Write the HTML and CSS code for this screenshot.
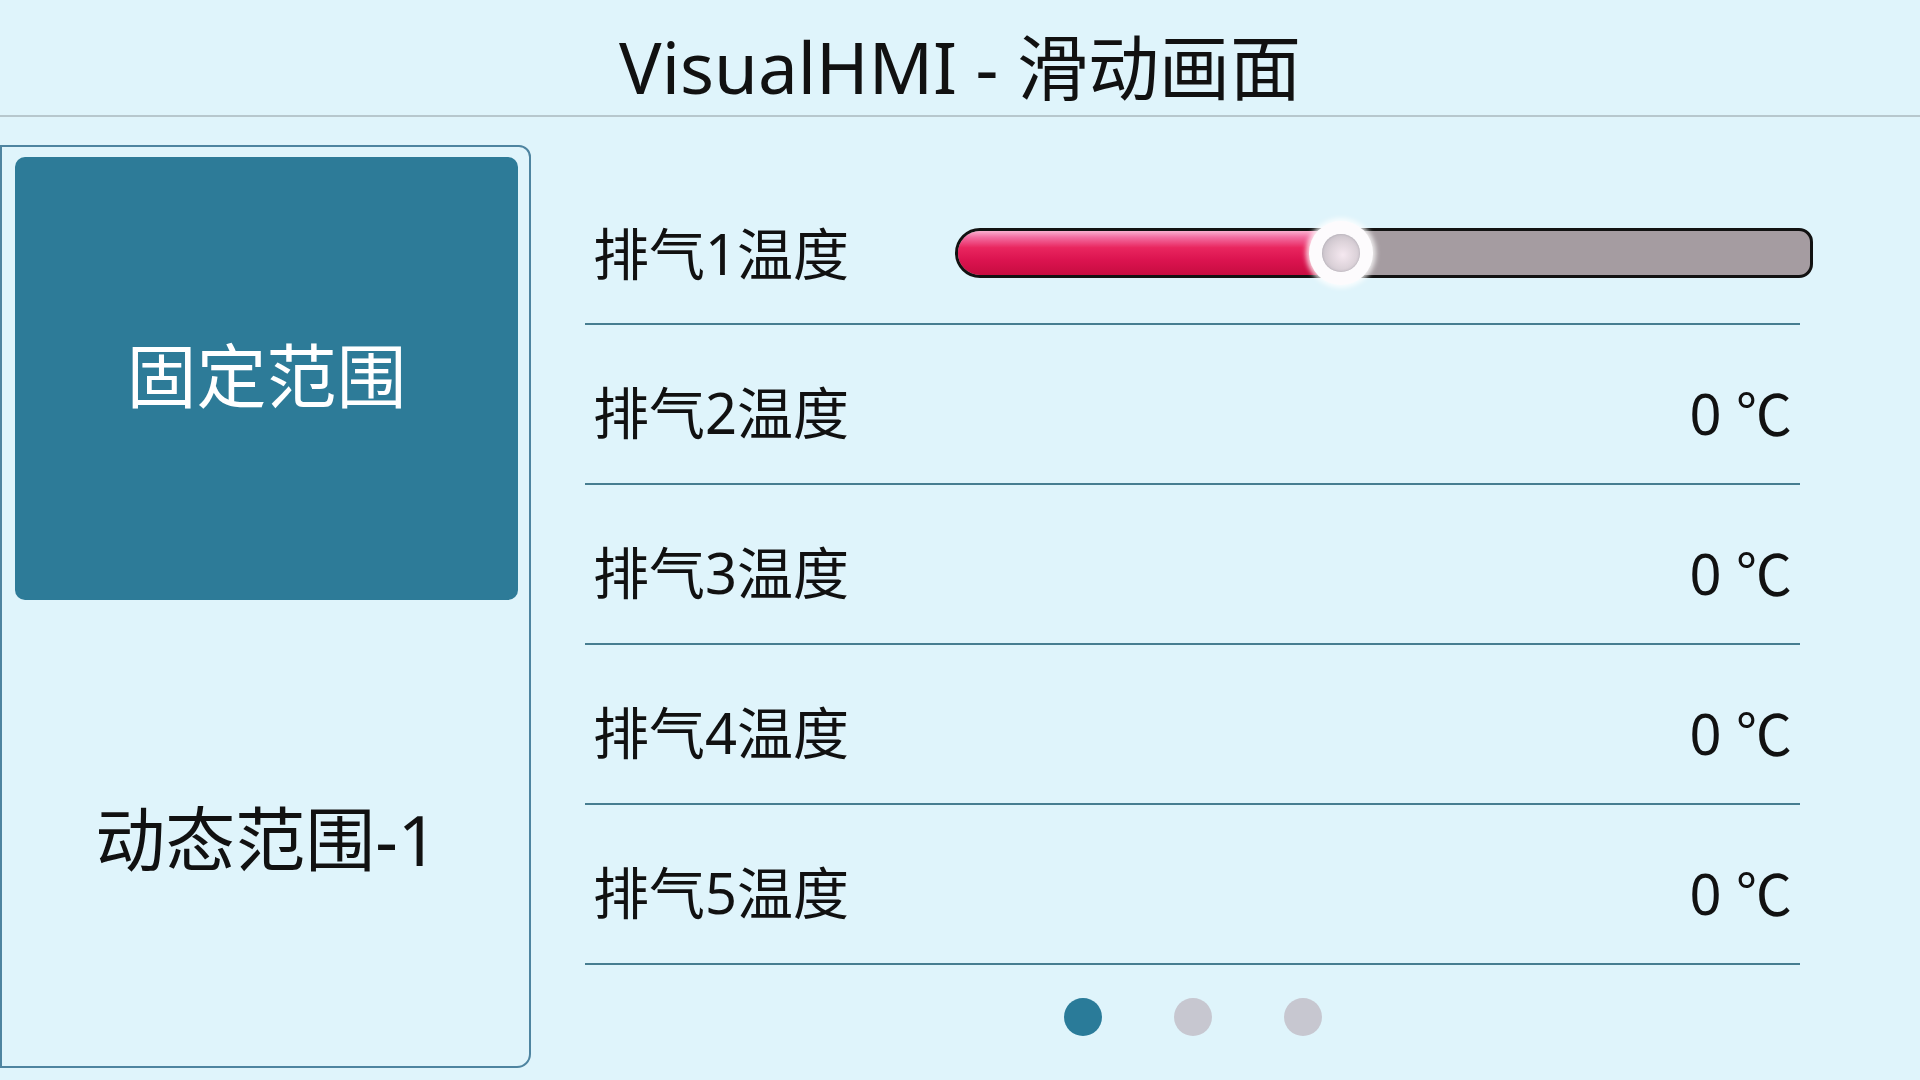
FILE: index.html
```html
<!DOCTYPE html>
<html lang="zh-CN">
<head>
<meta charset="utf-8">
<title>VisualHMI - 滑动画面</title>
<link rel="stylesheet" href="styles.css">
</head>
<body>
<header class="topbar">
  <h1 class="title">VisualHMI - 滑动画面</h1>
</header>
<main class="main">
  <nav class="side">
    <div class="side-item active">固定范围</div>
    <div class="side-item">动态范围-1</div>
  </nav>
  <section class="content">
    <div class="rows">
      <div class="row row-slider">
        <span class="label">排气1温度</span>
        <div class="slider">
          <div class="fill" style="width:45%"></div>
          <div class="knob" style="left:45%"></div>
        </div>
      </div>
      <div class="row">
        <span class="label">排气2温度</span>
        <span class="value">0 <span class="unit">℃</span></span>
      </div>
      <div class="row">
        <span class="label">排气3温度</span>
        <span class="value">0 <span class="unit">℃</span></span>
      </div>
      <div class="row">
        <span class="label">排气4温度</span>
        <span class="value">0 <span class="unit">℃</span></span>
      </div>
      <div class="row">
        <span class="label">排气5温度</span>
        <span class="value">0 <span class="unit">℃</span></span>
      </div>
    </div>
    <div class="dots">
      <span class="dot on"></span>
      <span class="dot"></span>
      <span class="dot"></span>
    </div>
  </section>
</main>
</body>
</html>
```

FILE: styles.css
```css
* { box-sizing: border-box; }

html, body {
  margin: 0;
  padding: 0;
}

body {
  width: 1920px;
  height: 1080px;
  overflow: hidden;
  background: #dff4fb;
  color: #111;
  font-family: "Noto Sans", "Noto Sans CJK SC", sans-serif;
}

.topbar {
  height: 117px;
  border-bottom: 2px solid #b7c7cd;
  padding-top: 18px;
}

.title {
  margin: 0;
  font-size: 71px;
  font-weight: 400;
  line-height: 97px;
  text-align: center;
}

.main {
  display: flex;
  align-items: flex-start;
  height: 963px;
}

.side {
  margin-top: 28px;
  width: 531px;
  height: 923px;
  flex: none;
  border: 2px solid #4e84a0;
  border-radius: 0 12px 14px 0;
  padding: 10px 11px 8px 13px;
  display: flex;
  flex-direction: column;
  gap: 20px;
}

.side-item {
  flex: 1;
  display: flex;
  align-items: center;
  justify-content: center;
  font-size: 70px;
  line-height: 1;
  border-radius: 10px;
  color: #111;
}

.side-item.active {
  background: #2d7b98;
  color: #fff;
  padding-bottom: 4px;
}

.content {
  margin-left: 54px;
  width: 1215px;
  flex: none;
  padding-top: 48px;
}

.row {
  height: 160px;
  border-bottom: 2px solid #467d90;
  padding: 15px 8px 0 8px;
  display: flex;
  align-items: center;
  justify-content: space-between;
  font-size: 56px;
  line-height: 1;
}

.row-slider {
  padding-top: 17px;
}

.label {
  white-space: nowrap;
}

.row-slider .label {
  width: 362px;
  flex: none;
}

.value {
  white-space: nowrap;
}

.unit {
  font-family: "Noto Sans CJK SC", sans-serif;
}

.slider {
  position: relative;
  flex: none;
  width: 858px;
  height: 50px;
  margin-right: -21px;
  border: 3px solid #121212;
  border-radius: 25px 14px 14px 25px;
  background: #a59ca1;
}

.fill {
  height: 100%;
  border-radius: 22px 0 0 22px;
  background: linear-gradient(to bottom,
    #fbb0d0 0%,
    #f36ea2 14%,
    #e9265f 38%,
    #dc1450 65%,
    #c70c40 100%);
}

.knob {
  position: absolute;
  top: 50%;
  width: 64px;
  height: 64px;
  margin-left: -32px;
  margin-top: -32px;
  border-radius: 50%;
  background: #fdfbfd;
  box-shadow: 0 0 5px 3px rgba(255, 255, 255, 0.8);
  display: flex;
  align-items: center;
  justify-content: center;
}

.knob::after {
  content: "";
  width: 38px;
  height: 38px;
  border-radius: 50%;
  background: radial-gradient(circle at 55% 55%, #f5e8f0 0%, #ddd3da 45%, #b7b3bb 100%);
  box-shadow: inset 0 0 2px rgba(120, 120, 130, 0.5);
}

.dots {
  margin-top: 33px;
  display: flex;
  justify-content: center;
  gap: 72px;
}

.dot {
  width: 38px;
  height: 38px;
  border-radius: 50%;
  background: #c7c7d0;
}

.dot.on {
  background: #2a7b99;
}
```
